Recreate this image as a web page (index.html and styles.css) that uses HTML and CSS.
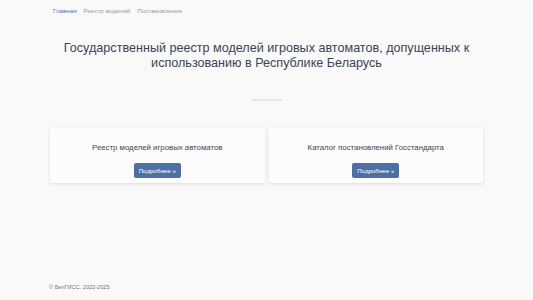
FILE: index.html
```html
<!DOCTYPE html>
<html lang="ru">
<head>
    <meta charset="UTF-8">
    <meta name="viewport" content="width=device-width, initial-scale=1.0">
    <title>Государственный реестр моделей игровых автоматов</title>
    <link rel="stylesheet" href="styles.css">
</head>
<body>
    <div class="page">
        <ul class="crumbs">
            <li><a href="#" class="active">Главная</a></li>
            <li><a href="#">Реестр моделей</a></li>
            <li><a href="#">Постановления</a></li>
        </ul>
        <h1>Государственный реестр моделей игровых автоматов, допущенных к использованию в Республике Беларусь</h1>
        <hr class="divider">
        <div class="cards">
            <div class="card">
                <p>Реестр моделей игровых автоматов</p>
                <a href="#" class="btn">Подробнее »</a>
            </div>
            <div class="card">
                <p>Каталог постановлений Госстандарта</p>
                <a href="#" class="btn">Подробнее »</a>
            </div>
        </div>
    </div>
    <footer class="footer">© БелГИСС, 2022-2025</footer>
</body>
</html>
```

FILE: styles.css
```css
html, body {
    height: 100%;
}
body {
    margin: 0;
    background: #f9f9f9;
    font-family: "Liberation Sans", Arial, sans-serif;
    color: #3a4456;
    display: flex;
    flex-direction: column;
}
.page {
    flex: 1;
    width: 433px;
    margin: 0 auto;
}
.crumbs {
    list-style: none;
    margin: 0;
    padding: 6px 0 0 3px;
    display: flex;
    gap: 7px;
    font-size: 6.2px;
    line-height: 9px;
}
.crumbs a {
    color: #9a9a9a;
    text-decoration: none;
}
.crumbs a.active {
    color: #4f7bb8;
}
h1 {
    margin: 26px 0 0 0;
    font-size: 12.6px;
    font-weight: normal;
    line-height: 15px;
    text-align: center;
}
.divider {
    width: 30px;
    height: 2px;
    margin: 28px auto 0 auto;
    border: none;
    background: #e6e6e6;
}
.cards {
    margin-top: 27px;
    display: flex;
    gap: 4px;
}
.card {
    flex: 1;
    height: 55px;
    box-sizing: border-box;
    padding-top: 15px;
    background: #fcfcfc;
    box-shadow: 0 1px 3px rgba(0, 0, 0, 0.12);
    text-align: center;
}
.card p {
    margin: 0;
    font-size: 7.8px;
    line-height: 9px;
}
.btn {
    display: inline-block;
    margin-top: 11px;
    padding: 0 5px;
    line-height: 15px;
    font-size: 6.2px;
    color: #fff;
    background: #4c70a6;
    border-radius: 2px;
    text-decoration: none;
}
.footer {
    width: 435px;
    margin: 0 auto;
    padding-bottom: 10px;
    font-size: 5.6px;
    color: #777;
}
```
